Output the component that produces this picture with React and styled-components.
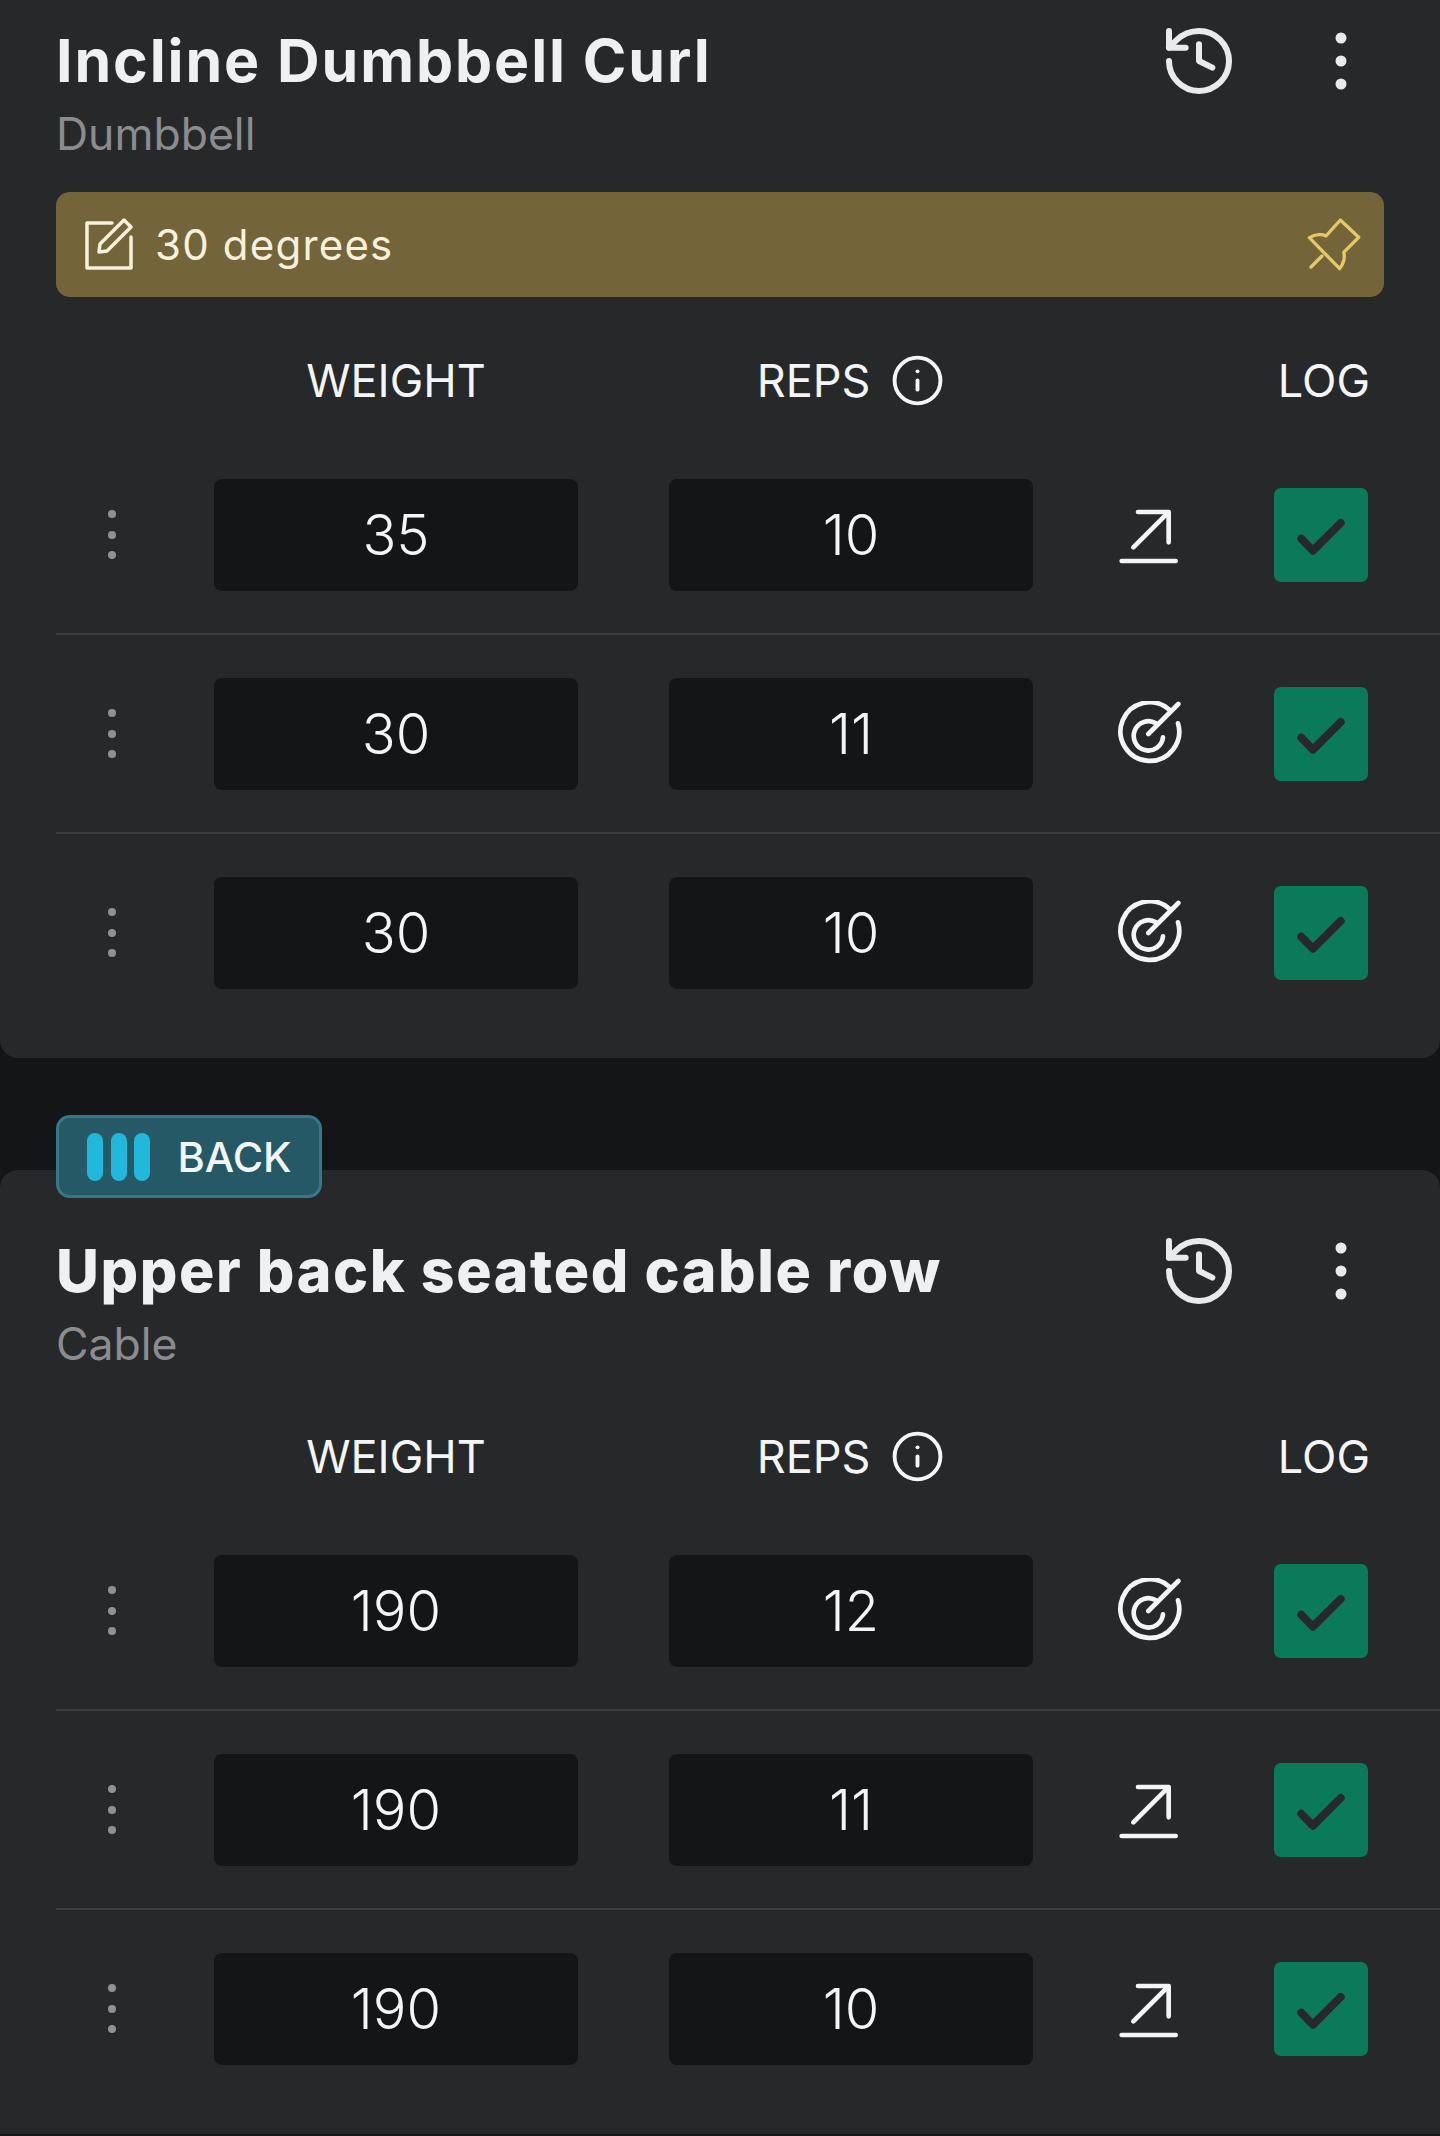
import React from 'react';
import styled, { createGlobalStyle } from 'styled-components';
import { History, Info } from 'lucide-react';

// === STYLES === //

const GlobalStyle = createGlobalStyle`
  html, body {
    margin: 0;
    background: #131517;
  }
  * {
    box-sizing: border-box;
  }
`;

const Page = styled.div`
  width: 1440px;
  height: 2136px;
  overflow: hidden;
  font-family: Inter, "Noto Sans", sans-serif;
  color: #f4f5f7;
`;

const Card = styled.section`
  position: relative;
  background: #26282a;
  padding: ${(props) => props.$top}px 0 25px 56px;
  border-radius: ${(props) => (props.$first ? '0 0 18px 18px' : '18px 18px 0 0')};
  margin-bottom: 112px;
`;

const MuscleTag = styled.div`
  position: absolute;
  top: -55px;
  left: 56px;
  width: 266px;
  height: 83px;
  display: flex;
  align-items: center;
  padding-left: 28px;
  background: #265966;
  border: 3px solid #36788a;
  border-radius: 14px;
  font-size: 41.5px;
  font-weight: 500;
`;

const TagBars = styled.div`
  display: flex;
  gap: 7.5px;
  margin-right: 27.5px;
`;

const TagBar = styled.span`
  width: 16px;
  height: 48px;
  border-radius: 8px;
  background: #22b8dc;
`;

const Heading = styled.div`
  display: flex;
  justify-content: space-between;
  padding-right: 93px;
`;

const Title = styled.h2`
  margin: 0;
  font-size: 59px;
  line-height: 68px;
  font-weight: ${(props) => props.$weight};
  letter-spacing: ${(props) => props.$spacing}px;
  color: #eef0f2;
  white-space: nowrap;
`;

const Subtitle = styled.div`
  margin: 14px 0 4px;
  font-size: 44.5px;
  line-height: 50px;
  color: #8b8c8f;
`;

const Actions = styled.div`
  display: flex;
  align-items: center;
  gap: 96px;
  height: 68px;
  color: #e9eaec;
`;

const Banner = styled.div`
  display: flex;
  align-items: center;
  justify-content: space-between;
  height: 105px;
  margin: 29px 56px 0 0;
  padding: 0 22px 0 24px;
  background: #736539;
  border-radius: 14px;
`;

const BannerText = styled.div`
  display: flex;
  align-items: center;
  gap: 15px;
  font-size: 42px;
  letter-spacing: 1.2px;
  color: #f6f1de;
`;

const HeaderRow = styled.div`
  display: flex;
  align-items: center;
  height: 52px;
  margin: 57px 0 30px;
  padding: 0 70px 0 158px;
  font-size: 45px;
`;

const HeadCell = styled.div`
  width: 364px;
  display: flex;
  align-items: center;
  justify-content: center;
  gap: 20px;
  margin-right: ${(props) => props.$gap || 0}px;
`;

const LogHead = styled.div`
  margin-left: auto;
`;

const SetRow = styled.div`
  display: flex;
  align-items: center;
  height: 199px;
  border-bottom: 2px solid ${(props) => (props.$last ? 'transparent' : '#3c3e41')};
`;

const Drag = styled.div`
  width: 112px;
  margin-right: 46px;
  display: flex;
  flex-direction: column;
  align-items: center;
  gap: 12.5px;
`;

const DragDot = styled.span`
  width: 8px;
  height: 8px;
  border-radius: 50%;
  background: #909194;
`;

const ValueBox = styled.div`
  width: 364px;
  height: 112px;
  margin-right: ${(props) => props.$gap || 0}px;
  display: flex;
  align-items: center;
  justify-content: center;
  background: #131517;
  border-radius: 8px;
  font-size: 56px;
  font-weight: 300;
`;

const Result = styled.div`
  width: 232px;
  display: flex;
  justify-content: center;
`;

const CheckBox = styled.div`
  width: 94px;
  height: 94px;
  margin-left: 9px;
  display: flex;
  align-items: center;
  justify-content: center;
  background: #0b7a5b;
  border-radius: 7px;
`;

// === ICONS === //

const NoteIcon = () => (
  <svg width="60" height="60" viewBox="80 214 60 60" fill="none" stroke="#f6f1de" strokeWidth="3.5" strokeLinecap="round" strokeLinejoin="round">
    <path d="M112 222H87v45h44V236" />
    <path d="M100 243l24-24 7 7-24 24-8 1z" />
  </svg>
);

const PinIcon = () => (
  <svg width="55" height="55" viewBox="920 645 165 165" fill="none" stroke="#e8c766" strokeWidth="10" strokeLinecap="round" strokeLinejoin="round">
    <path d="M1020 654l55 52-45 45c4 12 2 32-12 49l-91-93c20-12 40-10 50-5z" />
    <path d="M965 762l-33 33" />
  </svg>
);

const DotsIcon = () => (
  <svg width="12" height="58" viewBox="0 0 12 58" fill="currentColor">
    <circle cx="6" cy="6" r="5.5" />
    <circle cx="6" cy="29" r="5.5" />
    <circle cx="6" cy="52" r="5.5" />
  </svg>
);

const TrendIcon = () => (
  <svg width="60" height="60" viewBox="360 135 180 180" fill="none" stroke="#f4f5f7" strokeWidth="14" strokeLinecap="round" strokeLinejoin="round">
    <path d="M417 156h92v91" />
    <path d="M505 160L403 262" />
    <path d="M368 303h162" />
  </svg>
);

const TargetIcon = () => (
  <svg width="66" height="66" viewBox="350 723 198 198" fill="none" stroke="#f4f5f7" strokeWidth="14" strokeLinecap="round">
    <path d="M510 749A88 88 0 1 0 536 790" />
    <path d="M470 790A44 44 0 1 0 491 832" />
    <path d="M447 822L537 732" />
  </svg>
);

const CheckIcon = () => (
  <svg width="52" height="44" viewBox="885 158 156 132" fill="none" stroke="#26282b" strokeWidth="24" strokeLinecap="round" strokeLinejoin="round">
    <path d="M904 235l35 36 83-83" />
  </svg>
);

// === COMPONENT DEFINITION === //

const exercises = [
  {
    name: 'Incline Dumbbell Curl',
    weight: 700,
    spacing: 1.9,
    equipment: 'Dumbbell',
    note: '30 degrees',
    sets: [
      { weight: 35, reps: 10, result: 'up' },
      { weight: 30, reps: 11, result: 'target' },
      { weight: 30, reps: 10, result: 'target' }
    ]
  },
  {
    name: 'Upper back seated cable row',
    weight: 800,
    spacing: 1.6,
    equipment: 'Cable',
    tag: 'BACK',
    sets: [
      { weight: 190, reps: 12, result: 'target' },
      { weight: 190, reps: 11, result: 'up' },
      { weight: 190, reps: 10, result: 'up' }
    ]
  }
];

const Exercise = ({ exercise }) => (
  <Card $first={!exercise.tag} $top={exercise.tag ? 67 : 27}>
    {exercise.tag && (
      <MuscleTag>
        <TagBars>
          <TagBar />
          <TagBar />
          <TagBar />
        </TagBars>
        {exercise.tag}
      </MuscleTag>
    )}
    <Heading>
      <div>
        <Title $weight={exercise.weight} $spacing={exercise.spacing}>{exercise.name}</Title>
        <Subtitle>{exercise.equipment}</Subtitle>
      </div>
      <Actions>
        <History size={80} strokeWidth={1.8} />
        <DotsIcon />
      </Actions>
    </Heading>
    {exercise.note && (
      <Banner>
        <BannerText>
          <NoteIcon />
          {exercise.note}
        </BannerText>
        <PinIcon />
      </Banner>
    )}
    <HeaderRow>
      <HeadCell $gap={91}>WEIGHT</HeadCell>
      <HeadCell>
        REPS
        <Info size={55} strokeWidth={1.7} />
      </HeadCell>
      <LogHead>LOG</LogHead>
    </HeaderRow>
    {exercise.sets.map((set, index) => (
      <SetRow key={index} $last={index === exercise.sets.length - 1}>
        <Drag>
          <DragDot />
          <DragDot />
          <DragDot />
        </Drag>
        <ValueBox $gap={91}>{set.weight}</ValueBox>
        <ValueBox>{set.reps}</ValueBox>
        <Result>{set.result === 'up' ? <TrendIcon /> : <TargetIcon />}</Result>
        <CheckBox>
          <CheckIcon />
        </CheckBox>
      </SetRow>
    ))}
  </Card>
);

const App = () => (
  <Page>
    <GlobalStyle />
    {exercises.map((exercise) => (
      <Exercise key={exercise.name} exercise={exercise} />
    ))}
  </Page>
);

export default App;
